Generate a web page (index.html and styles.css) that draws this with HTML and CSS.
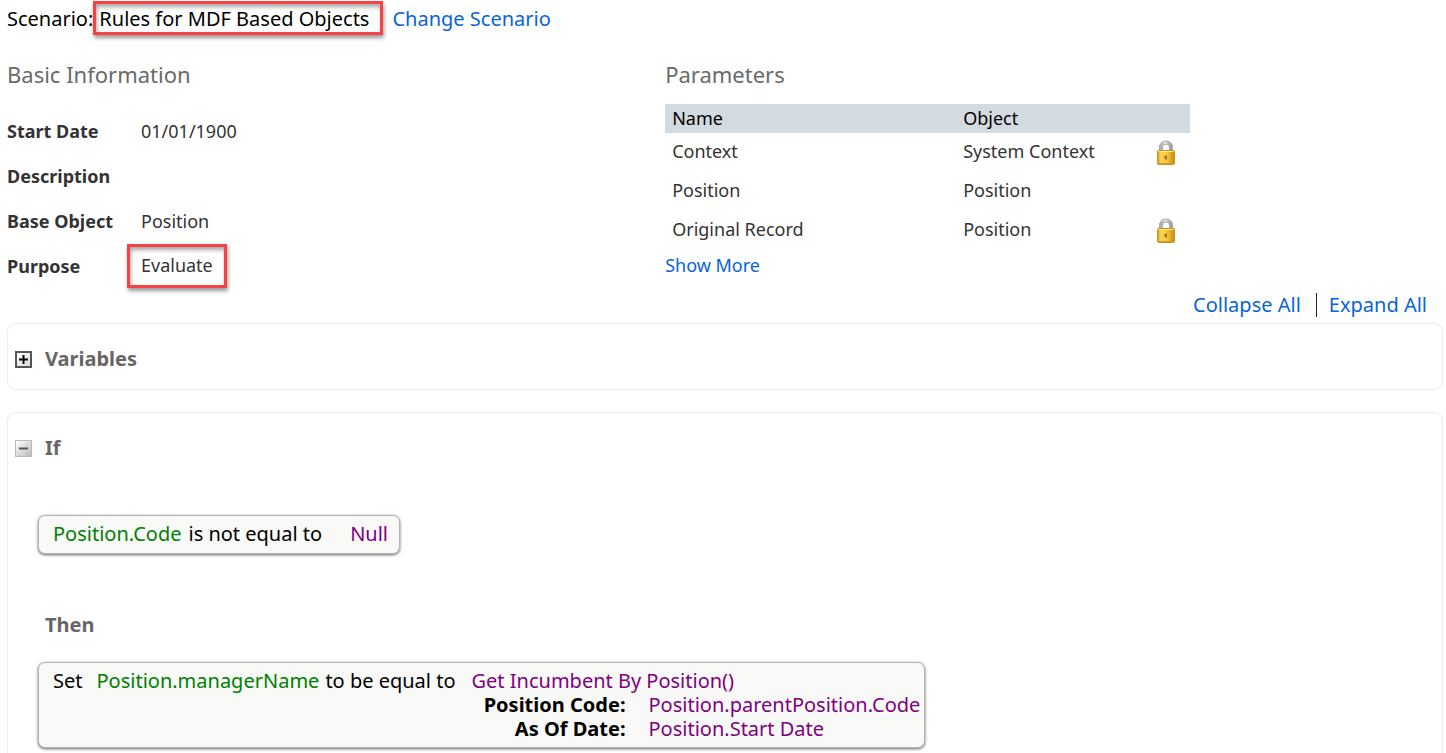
FILE: index.html
```html
<!DOCTYPE html>
<html lang="en">
<head>
<meta charset="utf-8">
<title>Business Rule</title>
<link rel="stylesheet" href="styles.css">
</head>
<body>
<svg class="defs" aria-hidden="true">
  <defs>
    <linearGradient id="gold" x1="0" x2="1" y1="0" y2="0">
      <stop offset="0" stop-color="#d99a1c"/><stop offset=".2" stop-color="#f7d45c"/>
      <stop offset=".55" stop-color="#f3c93a"/><stop offset="1" stop-color="#c88810"/>
    </linearGradient>
    <linearGradient id="steel" x1="0" x2="1" y1="0" y2="0">
      <stop offset="0" stop-color="#b0b0b0"/><stop offset=".4" stop-color="#e6e6e6"/><stop offset="1" stop-color="#a0a0a0"/>
    </linearGradient>
    <symbol id="lock" viewBox="0 0 18 25">
      <path d="M4 12V7.500a5 5 0 0 1 10 0V12" fill="none" stroke="#a2a2a2" stroke-width="4"/>
      <path d="M4 12V7.500a5 5 0 0 1 10 0V12" fill="none" stroke="url(#steel)" stroke-width="2.400"/>
      <rect x=".5" y="10.500" width="17" height="14" rx="1" fill="url(#gold)" stroke="#cf9220"/>
      <path d="M1.500 11.500h15" stroke="#fbe596"/>
      <path d="M1.500 23.500h15" stroke="#d79a20"/>
      <path d="M7 17.500l2.500-2v4z" fill="#a8741a" stroke="#a8741a"/>
    </symbol>
  </defs>
</svg>
<main class="page">
  <div class="scenario">
    <span>Scenario:</span>
    <span class="highlight scenario-name">Rules for MDF Based Objects</span>
    <a href="#scenario">Change Scenario</a>
  </div>

  <div class="summary">
    <section>
      <h2>Basic Information</h2>
      <dl class="facts">
        <dt>Start Date</dt><dd>01/01/1900</dd>
        <dt>Description</dt><dd></dd>
        <dt>Base Object</dt><dd>Position</dd>
        <dt>Purpose</dt><dd><span class="highlight purpose">Evaluate</span></dd>
      </dl>
    </section>
    <section>
      <h2>Parameters</h2>
      <table class="params">
        <thead><tr><th class="name">Name</th><th class="object">Object</th><th></th></tr></thead>
        <tbody>
          <tr><td>Context</td><td>System Context</td><td><svg class="lock" role="img" aria-label="Locked"><use href="#lock"/></svg></td></tr>
          <tr><td>Position</td><td>Position</td><td></td></tr>
          <tr><td>Original Record</td><td>Position</td><td><svg class="lock" role="img" aria-label="Locked"><use href="#lock"/></svg></td></tr>
        </tbody>
      </table>
      <a class="more" href="#more">Show More</a>
    </section>
  </div>

  <nav class="tools">
    <a href="#collapse">Collapse All</a>
    <a class="divided" href="#expand">Expand All</a>
  </nav>

  <section class="panel variables">
    <div class="panel-head">
      <button class="toggle closed" aria-label="Expand Variables"><svg viewBox="0 0 13 13"><path d="M2 6.500h9M6.500 2v9" stroke="#000" stroke-width="2"/></svg></button>
      <h3>Variables</h3>
    </div>
  </section>

  <section class="panel rule">
    <div class="panel-head">
      <button class="toggle" aria-label="Collapse If"><svg viewBox="0 0 15 15"><path d="M3 7.500h9" stroke="#555" stroke-width="2"/></svg></button>
      <h3>If</h3>
    </div>
    <div class="expression condition">
      <span class="field">Position.Code</span>
      <span>is not equal to</span>
      <span class="value">Null</span>
    </div>
    <h3 class="then">Then</h3>
    <div class="expression action">
      <span class="set">Set</span>
      <span class="field">Position.managerName</span>
      <span>to be equal to</span>
      <div class="value">
        Get Incumbent By Position()
        <dl class="arguments">
          <dt>Position Code:</dt><dd>Position.parentPosition.Code</dd>
          <dt>As Of Date:</dt><dd>Position.Start Date</dd>
        </dl>
      </div>
    </div>
  </section>
</main>
</body>
</html>
```
FILE: styles.css
```css
* { box-sizing: border-box; }
body {
  margin: 0;
  background: #fff;
  color: #000;
  font: 20px/24px "Noto Sans", Roboto, sans-serif;
}
h2, h3, dl, dd { margin: 0; }
a { color: #0864d8; text-decoration: none; }
.defs { position: absolute; width: 0; height: 0; }
.page { padding: 1px 3px 0 7px; overflow: hidden; }

.highlight {
  border: 3px solid #f54343;
  box-shadow: 1px 3px 4px rgba(0, 0, 0, .4), inset 1px 3px 4px rgba(0, 0, 0, .35);
}
.scenario { display: flex; height: 34px; line-height: 36px; }
.scenario-name { height: 34px; line-height: 30px; padding: 0 11px 0 3px; margin-right: 9px; }

.summary {
  display: grid;
  grid-template-columns: 11fr 13fr;
  padding-top: 25px;
  color: #333;
}
h2 { font-size: 22px; line-height: 28px; font-weight: 400; color: #6a6a6a; }
.facts {
  display: grid;
  grid-template-columns: 134px 1fr;
  grid-auto-rows: 45px;
  align-items: center;
  padding-top: 20px;
}
.facts, .params { font-size: 18px; }
.facts dt { font-weight: 700; }
.purpose { display: block; width: fit-content; margin-left: -14px; padding: 8px 11px 9px; line-height: 21px; }

.params { width: 525px; margin-top: 16px; border-collapse: collapse; table-layout: fixed; }
.params th { height: 29px; background: #d3dae0; color: #000; font-weight: 400; text-align: left; }
.params th, .params td { padding: 0 7px 2px; }
.params td { height: 39px; padding-bottom: 4px; }
.params .name { width: 291px; }
.params .object { width: 194px; }
.lock { display: block; width: 18px; height: 25px; margin-top: 3px; }
.more { display: block; margin-top: 3px; font-size: 18px; }

.tools { display: flex; justify-content: flex-end; padding: 5px 16px 6px 0; }
.divided { border-left: 1px solid #222; margin-left: 15px; padding-left: 12px; }

.panel { border: 1px solid #ececec; border-radius: 9px; }
.variables { padding: 23px 7px 18px; margin-bottom: 22px; }
.rule { padding: 23px 7px 24px; border-bottom: 0; border-radius: 9px 9px 0 0; }
.panel-head { display: flex; align-items: center; gap: 13px; }
h3 { font-size: 20px; line-height: 24px; font-weight: 700; color: #666; }
.toggle {
  width: 17px; height: 17px; padding: 0;
  border: 1px solid #bbb;
  background: linear-gradient(135deg, #fff, #bbb);
}
.toggle.closed { border: 2px solid #555; background: linear-gradient(135deg, #fff, #ddd); }
.toggle svg { display: block; width: 100%; height: 100%; }

.expression {
  display: flex;
  width: fit-content;
  margin-left: 23px;
  border: 1px solid #b4b4b4;
  border-radius: 7px;
  background: #f9f9f8;
  box-shadow: 0 1px 3px rgba(0, 0, 0, .6);
}
.condition { margin-top: 55px; padding: 6px 11px 7px 14px; gap: 7px; }
.condition .value { margin-left: 21px; }
.then { margin: 59px 0 25px 30px; }
.action { padding: 6px 4px 6px 14px; gap: 6px; }
.set { margin-right: 8px; }
.action .value { margin-left: 10px; }
.field { color: #008000; }
.value { color: #800080; }
.arguments { display: grid; grid-template-columns: 154px auto; column-gap: 23px; }
.arguments dt { color: #000; font-weight: 700; text-align: right; }
```
